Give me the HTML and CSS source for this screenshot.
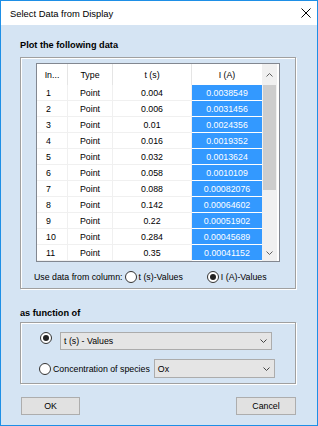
FILE: index.html
```html
<!DOCTYPE html>
<html lang="en">
<head>
  <meta charset="UTF-8">
  <title>Select Data from Display</title>
  <link rel="stylesheet" href="styles.css">
</head>
<body>
  <div class="window">
    <div class="titlebar">
      <span>Select Data from Display</span>
      <svg class="close" width="10" height="10" viewBox="0 0 10 10"><path d="M0.5 0.5L9.5 9.5M9.5 0.5L0.5 9.5" stroke="#000" stroke-width="1"/></svg>
    </div>

    <div class="content">
      <div class="heading">Plot the following data</div>
      <div class="group group-data">
        <div class="table">
          <div class="rows">
            <div class="c h idx-h">In...</div><div class="c h">Type</div><div class="c h">t (s)</div><div class="c h last">I (A)</div>

            <div class="c idx">1</div><div class="c">Point</div><div class="c">0.004</div><div class="c sel">0.0038549</div>
            <div class="c idx">2</div><div class="c">Point</div><div class="c">0.006</div><div class="c sel">0.0031456</div>
            <div class="c idx">3</div><div class="c">Point</div><div class="c">0.01</div><div class="c sel">0.0024356</div>
            <div class="c idx">4</div><div class="c">Point</div><div class="c">0.016</div><div class="c sel">0.0019352</div>
            <div class="c idx">5</div><div class="c">Point</div><div class="c">0.032</div><div class="c sel">0.0013624</div>
            <div class="c idx">6</div><div class="c">Point</div><div class="c">0.058</div><div class="c sel">0.0010109</div>
            <div class="c idx">7</div><div class="c">Point</div><div class="c">0.088</div><div class="c sel">0.00082076</div>
            <div class="c idx">8</div><div class="c">Point</div><div class="c">0.142</div><div class="c sel">0.00064602</div>
            <div class="c idx">9</div><div class="c">Point</div><div class="c">0.22</div><div class="c sel">0.00051902</div>
            <div class="c idx">10</div><div class="c">Point</div><div class="c">0.284</div><div class="c sel">0.00045689</div>
            <div class="c idx">11</div><div class="c">Point</div><div class="c">0.35</div><div class="c sel">0.00041152</div>
          </div>
          <div class="scrollbar">
            <div class="sb-btn sb-up"><svg width="7" height="4" viewBox="0 0 7 4"><path d="M0.5 3.5L3.5 0.5L6.5 3.5" fill="none" stroke="#606060"/></svg></div>
            <div class="sb-thumb"></div>
            <div class="sb-fill"></div>
            <div class="sb-btn sb-down"><svg width="7" height="4" viewBox="0 0 7 4"><path d="M0.5 0.5L3.5 3.5L6.5 0.5" fill="none" stroke="#606060"/></svg></div>
          </div>
        </div>

        <div class="source">
          <span>Use data from column:</span>
          <span class="radio first"></span><span class="opt">t (s)-Values</span>
          <span class="radio checked second"></span><span class="opt">I (A)-Values</span>
        </div>
      </div>

      <div class="heading heading-func">as function of</div>
      <div class="group group-func">
        <div class="func-row top">
          <span class="radio checked"></span>
          <div class="combo combo-wide">
            <span>t (s) - Values</span>
            <svg width="7" height="4" viewBox="0 0 7 4"><path d="M0.5 0.5L3.5 3.5L6.5 0.5" fill="none" stroke="#444"/></svg>
          </div>
        </div>
        <div class="func-row bottom">
          <span class="radio"></span>
          <span class="species">Concentration of species</span>
          <div class="combo combo-small">
            <span>Ox</span>
            <svg width="7" height="4" viewBox="0 0 7 4"><path d="M0.5 0.5L3.5 3.5L6.5 0.5" fill="none" stroke="#444"/></svg>
          </div>
        </div>
      </div>

      <div class="buttons">
        <div class="btn ok">OK</div>
        <div class="btn cancel">Cancel</div>
      </div>
    </div>
  </div>
</body>
</html>
```

FILE: styles.css
```css
body {
  margin: 0;
  font-family: 'Liberation Sans', Arial, sans-serif;
  font-size: 8.8px;
  color: #000;
}
.window {
  width: 318px;
  height: 426px;
  box-sizing: border-box;
  border: 1px solid #1e8fe6;
  background: #d5e4f3;
}
.titlebar {
  height: 24px;
  background: #fff;
  display: flex;
  align-items: center;
  justify-content: space-between;
  padding: 0 6px 0 9px;
  font-size: 9.4px;
}
.content {
  padding: 14px 21px 0 19px;
}
.heading {
  font-weight: bold;
  font-size: 9.2px;
  line-height: 12px;
  margin-bottom: 6px;
}
.heading-func {
  margin-top: 18px;
  margin-bottom: 3px;
}
.group {
  border: 1px solid #a0a0a0;
  box-shadow: inset 1px 1px 0 #fff, 1px 1px 0 #fff;
}
.group-data {
  height: 232px;
  box-sizing: border-box;
  padding: 5px 0 0 15px;
}

/* data grid */
.table {
  display: flex;
  width: 242px;
  border: 1px solid #828790;
  background: #fff;
}
.rows {
  display: grid;
  grid-template-columns: 31px 45px 79px 70px;
  grid-template-rows: 21px repeat(11, 16px);
}
.c {
  box-sizing: border-box;
  display: flex;
  align-items: center;
  justify-content: center;
  border-right: 1px solid #f0f0f0;
  border-bottom: 1px solid #f0f0f0;
  white-space: nowrap;
}
.h {
  border-bottom: none;
  border-right-color: #e5e5e5;
}
.h.last {
  border-right: none;
}
.idx {
  justify-content: flex-start;
  padding-left: 9px;
}
.sel {
  background: #3399ff;
  color: #fff;
  border-right: none;
  border-bottom: 1px solid #fff;
}
.scrollbar {
  width: 15px;
  background: #f0f0f0;
  display: flex;
  flex-direction: column;
}
.sb-btn {
  display: flex;
  align-items: center;
  justify-content: center;
}
.sb-up {
  height: 21px;
}
.sb-down {
  height: 17px;
}
.sb-thumb {
  height: 105px;
  margin: 0 1px;
  background: #cdcdcd;
}
.sb-fill {
  flex: 1;
}

.source {
  display: flex;
  align-items: center;
  height: 13px;
  margin: 8px 0 0 -2px;
}
.radio {
  width: 12px;
  height: 12px;
  box-sizing: border-box;
  border: 1px solid #333;
  border-radius: 50%;
  background: #fff;
  display: inline-flex;
  align-items: center;
  justify-content: center;
  flex: none;
}
.radio.checked::after {
  content: '';
  width: 6px;
  height: 6px;
  border-radius: 50%;
  background: #222;
}
.radio.first {
  margin-left: 2px;
}
.radio.second {
  margin-left: 24px;
}
.opt {
  margin-left: 2px;
}

.group-func {
  padding: 9px 0 5px 19px;
}
.func-row {
  display: flex;
  align-items: center;
}
.func-row.top {
  align-items: flex-start;
}
.func-row.bottom {
  margin-top: 9px;
}
.func-row.bottom .radio {
  margin-left: -1px;
}
.species {
  margin-left: 2px;
}
.combo {
  display: flex;
  align-items: center;
  justify-content: space-between;
  box-sizing: border-box;
  border: 1px solid #acacac;
  background: #e5e5e5;
  padding: 0 4px 0 3px;
}
.combo-wide {
  width: 212px;
  height: 18px;
  margin-left: 8px;
}
.combo-small {
  width: 121px;
  height: 19px;
  margin-left: 4px;
}

.buttons {
  display: flex;
  justify-content: space-between;
  margin-top: 13px;
  padding-left: 1px;
}
.btn {
  height: 18px;
  box-sizing: border-box;
  border: 1px solid #adadad;
  background: #e1e1e1;
  display: flex;
  align-items: center;
  justify-content: center;
}
.ok {
  width: 59px;
}
.cancel {
  width: 60px;
}
```
